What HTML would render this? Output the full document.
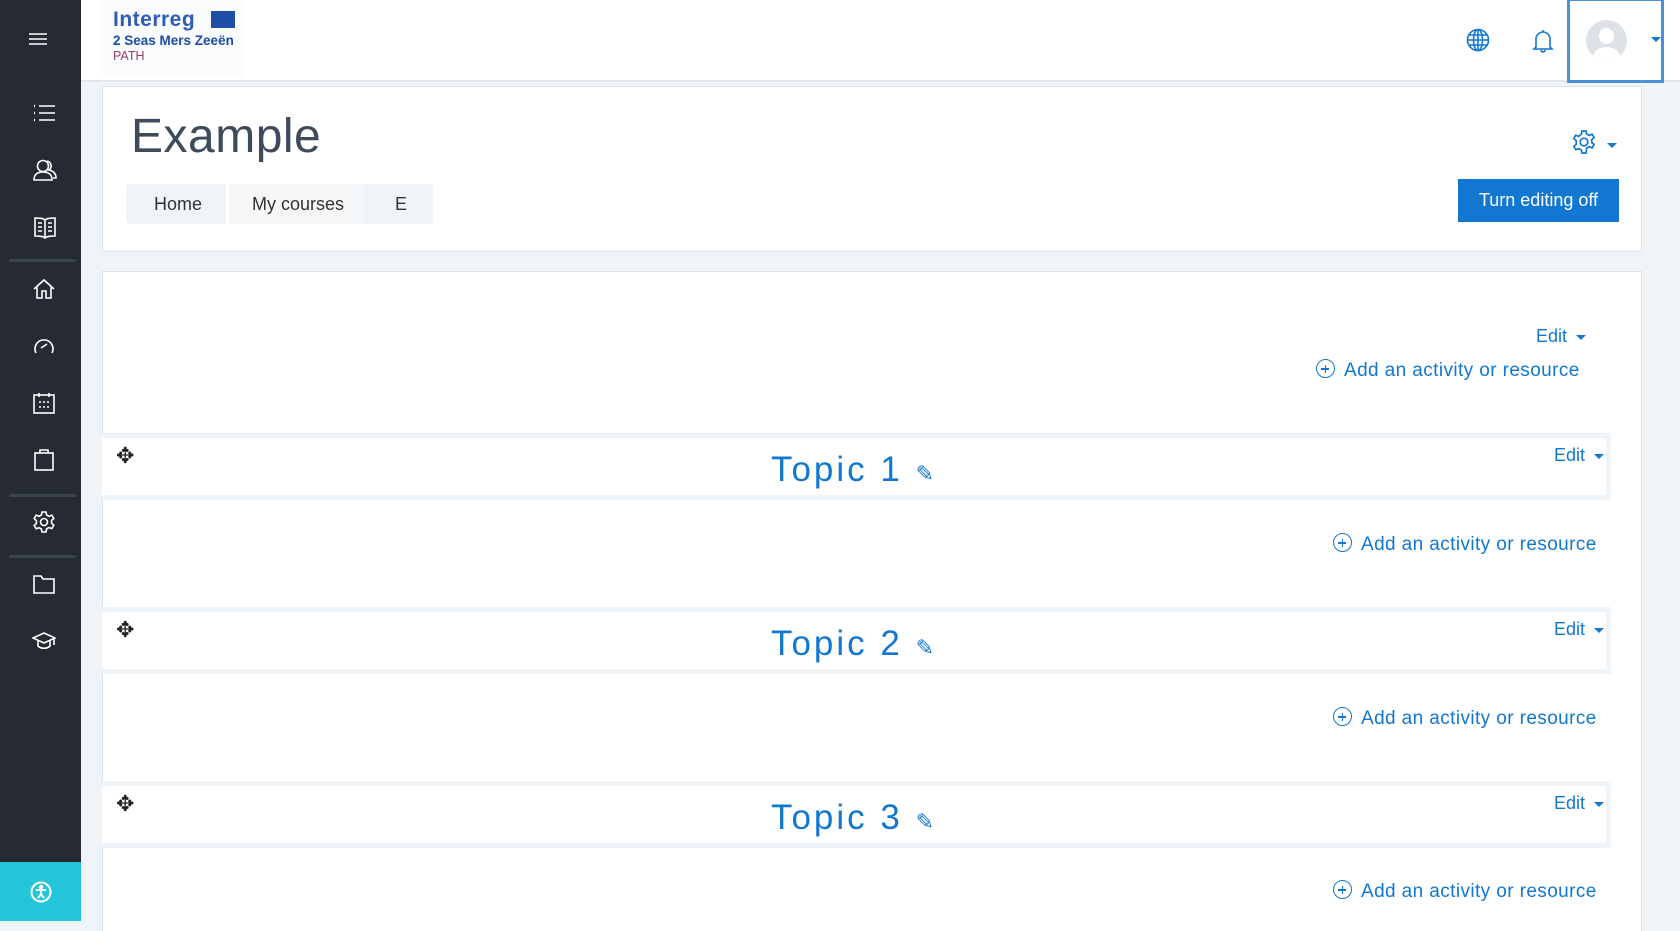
<!DOCTYPE html>
<html><head><meta charset="utf-8"><style>
*{box-sizing:border-box;margin:0;padding:0}
body{width:1680px;height:921px;overflow:hidden;background:#eef4f8;font-family:"Liberation Sans",sans-serif;position:relative}
.abs{position:absolute}
.side{left:0;top:0;width:81px;height:921px;background:#262a33}
.side svg{position:absolute;stroke:#fff;fill:none;stroke-width:1.6}
.sep{position:absolute;left:9px;width:67px;height:3px;background:#3a4450;border-radius:2px}
.acc{left:0;top:862px;width:81px;height:59px;background:#26c6da}
.hdr{left:81px;top:0;width:1599px;height:82px;background:#fff;border-bottom:2px solid #dfe6ec}
.card{background:#fff;border:1px solid #dbe3ea}
.sec{position:absolute;left:102px;width:1509px;height:67px;background:#fff;border:5px solid #eef4f8;border-left:none}
.topic{position:absolute;left:0;right:0;top:12px;text-align:center;font-size:35px;color:#1177d1;letter-spacing:3px}
.edit{position:absolute;font-size:18px;color:#1177d1}
.edit:after{content:"";display:inline-block;margin-left:9px;vertical-align:middle;border-left:5px solid transparent;border-right:5px solid transparent;border-top:5px solid #1177d1}
.add{position:absolute;font-size:19px;letter-spacing:.4px;color:#1177d1;white-space:nowrap}
.add i{display:inline-block;width:19px;height:19px;border:1.5px solid #1177d1;border-radius:50%;vertical-align:-2px;margin-right:9px;position:relative;font-style:normal}
.add i:before{content:"";position:absolute;left:4px;top:8px;width:8px;height:1.5px;background:#1177d1}
.add i:after{content:"";position:absolute;left:7.5px;top:4.5px;width:1.5px;height:8px;background:#1177d1}
.move{position:absolute;left:14px;top:5px;font-size:22px;color:#222}
</style></head><body>
<div class="abs side">
 <svg style="left:28px;top:31px" width="20" height="16"><path d="M1 3h18M1 8h18M1 13h18"/></svg>
 <svg style="left:32px;top:103px" width="24" height="20"><path d="M7 3h16M7 10h16M7 17h16"/><path d="M2 3h1M2 10h1M2 17h1" stroke-width="2.5"/></svg>
 <svg style="left:33px;top:158px" width="24" height="24"><circle cx="10" cy="8" r="5.5"/><path d="M1 22c0-6 4-8 9-8s9 2 9 8zM14 3a5 5 0 0 1 2 9c4 1 7 3 7 8h-3"/></svg>
 <svg style="left:33px;top:215px" width="24" height="24"><path d="M2 3c4 0 8 0 10 2c2-2 6-2 10-2v18c-4 0-8 0-10 2c-2-2-6-2-10-2zM12 5v18M5 8h4M5 12h4M5 16h4M15 8h4M15 12h4M15 16h4"/></svg>
 <div class="sep" style="top:259px"></div>
 <svg style="left:32px;top:277px" width="24" height="24"><path d="M2 12L12 3l10 9M5 10v11h5v-7h4v7h5V10"/></svg>
 <svg style="left:32px;top:334px" width="24" height="24"><path d="M4 19A9 9 0 1 1 20 19"/><path d="M9 14l6-4"/></svg>
 <svg style="left:32px;top:391px" width="24" height="24"><rect x="2" y="4" width="20" height="18"/><path d="M7 2v4M17 2v4M7 11h2M11 11h2M15 11h2M7 16h2M11 16h2M15 16h2"/></svg>
 <svg style="left:33px;top:448px" width="22" height="24"><rect x="2" y="5" width="18" height="17"/><path d="M7 5V2h8v3"/></svg>
 <div class="sep" style="top:494px"></div>
 <svg style="left:32px;top:510px" width="24" height="24"><circle cx="12" cy="12" r="3.5"/><path d="M10 2h4l.6 3 2.4 1.3 2.8-1.2 2 3.4-2.3 2 .1 2.8 2.2 1.9-2 3.4-2.8-1.1-2.4 1.3L14 22h-4l-.6-3-2.4-1.3-2.8 1.1-2-3.4 2.2-1.9V10.7L2.2 8.5l2-3.4L7 6.3 9.4 5z"/></svg>
 <div class="sep" style="top:555px"></div>
 <svg style="left:32px;top:573px" width="24" height="22"><path d="M2 3h7l2 3h11v14H2z"/></svg>
 <svg style="left:32px;top:630px" width="24" height="22"><path d="M1 8l11-5 11 5-11 5zM6 10v6c3 3 9 3 12 0v-6M22 8v7"/></svg>
</div>
<div class="abs acc"><svg style="position:absolute;left:30px;top:19px" width="22" height="22" fill="none" stroke="#fff" stroke-width="2"><circle cx="11" cy="11" r="9.5"/><circle cx="11" cy="6" r="1.3" fill="#fff"/><path d="M6 9h10M11 9v4l-3 4M11 13l3 4"/></svg></div>
<div class="abs hdr">
 <div class="abs" style="left:21px;top:0;width:143px;height:78px;background:#fafcfd">
  <div style="position:absolute;left:11px;top:8px;font-size:21px;font-weight:bold;color:#2d5cbc;letter-spacing:.5px">Interreg</div>
  <div style="position:absolute;left:109px;top:11px;width:24px;height:17px;background:#1f4ea8"></div>
  <div style="position:absolute;left:11px;top:33px;font-size:13.5px;color:#1b4aa8;font-weight:bold">2 Seas Mers Zeeën</div>
  <div style="position:absolute;left:11px;top:49px;font-size:12.5px;color:#9b3c6a">PATH</div>
 </div>
 <svg style="position:absolute;left:1385px;top:28px" width="24" height="24" fill="none" stroke="#1177d1" stroke-width="1.6"><circle cx="12" cy="12" r="10.5"/><ellipse cx="12" cy="12" rx="4.5" ry="10.5"/><path d="M1.5 12h21M3 7h18M3 17h18M12 1.5v21"/></svg>
 <svg style="position:absolute;left:1451px;top:28px" width="22" height="26" fill="none" stroke="#1177d1" stroke-width="1.6"><path d="M4 19V11a7 7 0 0 1 14 0v8l2 2H2zM9 22a2 2 0 0 0 4 0M11 2v2"/></svg>
 <div style="position:absolute;left:1486px;top:-2px;width:97px;height:85px;border:3px solid #4a8fd8"></div>
 <div style="position:absolute;left:1505px;top:20px;width:41px;height:41px;border-radius:50%;background:#dde2e6;overflow:hidden"><div style="position:absolute;left:13px;top:8px;width:15px;height:16px;border-radius:50%;background:#fff"></div><div style="position:absolute;left:7px;top:27px;width:27px;height:20px;border-radius:50%;background:#fff"></div></div>
 <div style="position:absolute;left:1570px;top:37px;border-left:5px solid transparent;border-right:5px solid transparent;border-top:5px solid #1177d1"></div>
</div>
<div class="abs card" style="left:102px;top:86px;width:1540px;height:166px">
 <div style="position:absolute;left:28px;top:22px;font-size:48px;color:#3e4b5b;letter-spacing:.5px">Example</div>
 <div style="position:absolute;left:23px;top:97px;height:40px;width:307px;background:#eef4f8;border-radius:4px;font-size:18px;color:#333">
  <span style="position:absolute;left:28px;top:10px">Home</span>
  <div style="position:absolute;left:100px;top:0;width:140px;height:40px;background:#f4f6f8;border-left:3px solid #fff"></div>
  <span style="position:absolute;left:126px;top:10px">My courses</span>
  <span style="position:absolute;left:269px;top:10px">E</span>
 </div>
 <svg style="position:absolute;left:1466px;top:40px" width="30" height="30" fill="none" stroke="#1177d1" stroke-width="1.7"><g transform="translate(3 3)"><circle cx="12" cy="12" r="3.8"/><path d="M10 1h4l.6 3 2.6 1.4 2.9-1.2 2 3.4-2.4 2 .1 3 2.3 1.9-2 3.4-2.9-1.1-2.6 1.4L14 23h-4l-.6-3-2.6-1.4-2.9 1.1-2-3.4 2.3-1.9V10.6L1.8 8.6l2-3.4 2.9 1.2L9.4 4z"/></g></svg>
 <div style="position:absolute;left:1504px;top:56px;border-left:5px solid transparent;border-right:5px solid transparent;border-top:5px solid #1177d1"></div>
 <div style="position:absolute;left:1355px;top:92px;width:161px;height:43px;background:#1177d1;color:#fff;font-size:18px;text-align:center;line-height:43px">Turn editing off</div>
</div>
<div class="abs card" style="left:102px;top:271px;width:1540px;height:660px;border-bottom:none">
</div>
<div class="edit" style="left:1536px;top:326px">Edit</div>
<div class="add" style="left:1316px;top:359px"><i></i>Add an activity or resource</div>

<div class="sec" style="top:433px"><div class="move">✥</div><div class="topic">Topic 1 <span style="font-size:22px">✎</span></div><div class="edit" style="left:1452px;top:7px">Edit</div></div>
<div class="add" style="left:1333px;top:533px"><i></i>Add an activity or resource</div>

<div class="sec" style="top:607px"><div class="move">✥</div><div class="topic">Topic 2 <span style="font-size:22px">✎</span></div><div class="edit" style="left:1452px;top:7px">Edit</div></div>
<div class="add" style="left:1333px;top:707px"><i></i>Add an activity or resource</div>

<div class="sec" style="top:781px"><div class="move">✥</div><div class="topic">Topic 3 <span style="font-size:22px">✎</span></div><div class="edit" style="left:1452px;top:7px">Edit</div></div>
<div class="add" style="left:1333px;top:880px"><i></i>Add an activity or resource</div>
</body></html>
